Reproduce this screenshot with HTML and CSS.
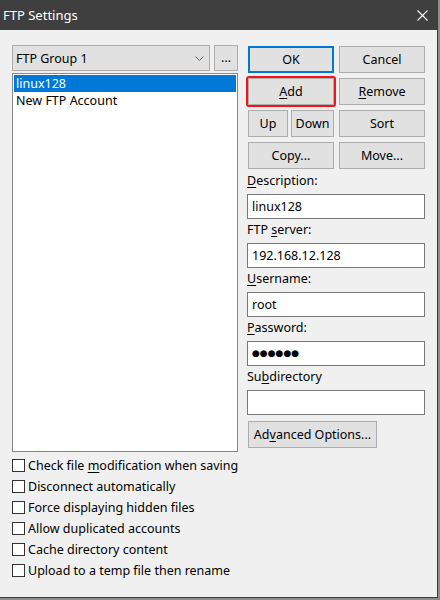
FILE: index.html
```html
<!DOCTYPE html>
<html>
<head>
<meta charset="utf-8">
<link rel="stylesheet" href="styles.css">
</head>
<body>
<div class="window">
  <div class="titlebar">
    <span class="title">FTP Settings</span>
    <svg class="close" width="11" height="11" viewBox="0 0 11 11"><path d="M0.5 0.5 L10.5 10.5 M10.5 0.5 L0.5 10.5" stroke="#fff" stroke-width="1.1" fill="none"/></svg>
  </div>
  <div class="client">
    <div class="main">
      <div class="left">
        <div class="combo-row">
          <div class="combo">
            <span>FTP Group 1</span>
            <svg class="chev" width="9" height="5" viewBox="0 0 9 5"><path d="M0.5 0.5 L4.5 4.5 L8.5 0.5" stroke="#606060" stroke-width="1" fill="none"/></svg>
          </div>
          <div class="btn dots">...</div>
        </div>
        <div class="list">
          <div class="item selected">linux128</div>
          <div class="item">New FTP Account</div>
        </div>
      </div>
      <div class="right">
        <div class="btn-grid">
          <div class="btn default">OK</div>
          <div class="btn">Cancel</div>
          <div class="btn focus-ring"><span><u>A</u>dd</span></div>
          <div class="btn"><span><u>R</u>emove</span></div>
          <div class="updown">
            <div class="btn up">Up</div>
            <div class="btn down">Down</div>
          </div>
          <div class="btn">Sort</div>
          <div class="btn">Copy...</div>
          <div class="btn">Move...</div>
        </div>
        <div class="field first">
          <div class="label"><u>D</u>escription:</div>
          <div class="input">linux128</div>
        </div>
        <div class="field">
          <div class="label">FTP <u>s</u>erver:</div>
          <div class="input">192.168.12.128</div>
        </div>
        <div class="field">
          <div class="label"><u>U</u>sername:</div>
          <div class="input">root</div>
        </div>
        <div class="field">
          <div class="label"><u>P</u>assword:</div>
          <div class="input pw">●●●●●●</div>
        </div>
        <div class="field">
          <div class="label">Su<u>b</u>directory</div>
          <div class="input"></div>
        </div>
        <div class="btn adv"><span>Ad<u>v</u>anced Options...</span></div>
      </div>
    </div>
    <div class="checks">
      <div class="check"><span class="box"></span><span>Check file <u>m</u>odification when saving</span></div>
      <div class="check"><span class="box"></span><span>Disconnect automatically</span></div>
      <div class="check"><span class="box"></span><span>Force displaying hidden files</span></div>
      <div class="check"><span class="box"></span><span>Allow duplicated accounts</span></div>
      <div class="check"><span class="box"></span><span>Cache directory content</span></div>
      <div class="check"><span class="box"></span><span>Upload to a temp file then rename</span></div>
    </div>
  </div>
</div>
</body>
</html>
```
FILE: styles.css
```css
html, body {
  margin: 0;
  padding: 0;
  background: #8e8e8e;
}
body {
  font-family: "Noto Sans", "Open Sans", sans-serif;
  font-size: 12.5px;
  color: #000;
}
u { text-decoration: underline; text-underline-offset: 2px; }

.window {
  width: 437px;
  height: 597px;
  background: #f0f0f0;
  border-right: 1px solid #3c3c3c;
  border-bottom: 1px solid #3c3c3c;
  display: flex;
  flex-direction: column;
  overflow: hidden;
}

.titlebar {
  height: 30px;
  flex: none;
  background: #3f3f3f;
  color: #fff;
  display: flex;
  align-items: center;
  justify-content: space-between;
  padding: 0 9px 0 3px;
  font-size: 13px;
}
.title { padding-bottom: 1px; }
.close { display: block; }

.client {
  padding: 15px 0 0 12px;
}
.main {
  display: flex;
  gap: 9px;
}
.left {
  width: 226px;
  display: flex;
  flex-direction: column;
}
.combo-row {
  display: flex;
  gap: 4px;
  height: 26px;
}
.combo {
  width: 200px;
  box-sizing: border-box;
  background: #e1e1e1;
  border: 1px solid #adadad;
  display: flex;
  align-items: center;
  justify-content: space-between;
  padding: 0 5px 0 3px;
}
.chev { display: block; }
.btn {
  box-sizing: border-box;
  background: #e1e1e1;
  border: 1px solid #adadad;
  display: flex;
  align-items: center;
  justify-content: center;
  height: 27px;
}
.dots {
  width: 24px;
  height: 26px;
  padding-bottom: 2px;
}
.list {
  margin-top: 2px;
  height: 379px;
  box-sizing: border-box;
  background: #fff;
  border: 1px solid #828790;
  padding: 1px;
}
.item {
  height: 17px;
  line-height: 17px;
  padding-left: 2px;
}
.item.selected {
  background: #0078d7;
  color: #fff;
}

.right {
  width: 178px;
  display: flex;
  flex-direction: column;
  padding-top: 1px;
}
.btn-grid {
  margin-left: 1px;
  display: grid;
  grid-template-columns: 86px 86px;
  column-gap: 5px;
  row-gap: 5px;
}
.btn.default {
  border: 2px solid #0078d7;
}
.btn.focus-ring {
  outline: 2px solid #f0151a;
  outline-offset: 0px;
  border-radius: 1px;
}
.updown {
  display: flex;
  gap: 3px;
}
.up { width: 40px; }
.down { width: 43px; }

.field {
  display: flex;
  flex-direction: column;
}
.label {
  height: 24px;
  line-height: 20px;
  padding-top: 1px;
  box-sizing: border-box;
}
.field.first { margin-top: 1px; }
.input {
  height: 25px;
  box-sizing: border-box;
  background: #fff;
  border: 1px solid #7a7a7a;
  padding-left: 4px;
  line-height: 23px;
}
.input.pw {
  font-family: "DejaVu Sans", sans-serif;
  font-size: 9px;
}
.adv {
  margin-top: 6px;
  margin-left: 1px;
  width: 129px;
}

.checks {
  margin-top: 3px;
  display: flex;
  flex-direction: column;
}
.check {
  height: 21px;
  display: flex;
  align-items: center;
}
.box {
  width: 13px;
  height: 13px;
  box-sizing: border-box;
  background: #fff;
  border: 1px solid #333;
  margin-right: 3px;
  flex: none;
}
```
